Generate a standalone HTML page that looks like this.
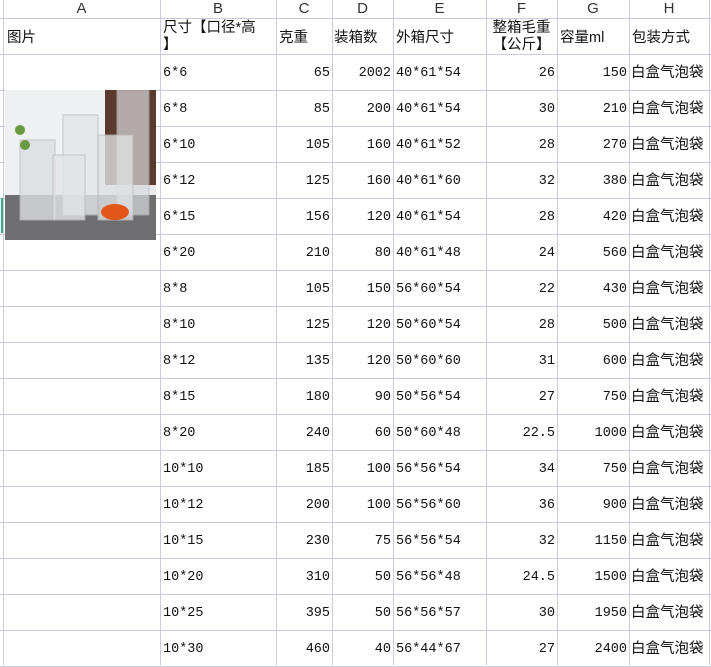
<!DOCTYPE html>
<html><head><meta charset="utf-8"><style>
body{margin:0;width:711px;height:665px;overflow:hidden;background:#fff;position:relative;font-family:"Liberation Mono","Noto Sans CJK SC",monospace;color:#111}
.v{position:absolute;top:0;width:1px;height:665px;background:#c8cbe2}
.h{position:absolute;left:0;width:711px;height:1px;background:#c8cbe2}
.t{position:absolute;font-size:13.5px;line-height:16px;white-space:nowrap}
.c{font-family:"Liberation Sans","Noto Sans CJK SC",sans-serif;font-size:14.5px}
.hd{position:absolute;top:0;height:18px;line-height:18px;font-family:"Liberation Sans",sans-serif;font-size:15px;color:#333;text-align:center}
</style></head><body>
<div id="g"></div>
<svg style="position:absolute;left:5px;top:90px" width="151" height="150" viewBox="0 0 151 150">
<rect width="151" height="150" fill="#e9eaec"/>
<rect x="100" y="0" width="51" height="95" fill="#5a3a2c"/>
<rect x="0" y="0" width="100" height="110" fill="#eef0f2"/>
<rect x="0" y="105" width="151" height="45" fill="#6e6e70"/>
<rect x="15" y="50" width="35" height="80" fill="#dcdfe2" stroke="#bbb" opacity=".8"/>
<rect x="58" y="25" width="35" height="100" fill="#e4e6e8" stroke="#bbb" opacity=".8"/>
<rect x="112" y="0" width="32" height="125" fill="#d8dadd" stroke="#bbb" opacity=".7"/>
<rect x="48" y="65" width="32" height="65" fill="#e2e4e6" stroke="#bbb" opacity=".8"/>
<rect x="93" y="45" width="35" height="85" fill="#dfe1e3" stroke="#bbb" opacity=".8"/>
<ellipse cx="110" cy="122" rx="14" ry="8" fill="#e2561a"/>
<circle cx="15" cy="40" r="5" fill="#6a9a40"/><circle cx="20" cy="55" r="5" fill="#6a9a40"/>
</svg>
<div style="position:absolute;left:1px;top:198px;width:2px;height:35px;background:#2fb07a"></div>
<script>
var xs=[3,160,276,332,393,486,557,629,709],g='';
xs.forEach(x=>g+='<div class="v" style="left:'+x+'px"></div>');
var ys=[18];for(var y=54;y<=666;y+=36)ys.push(y);
ys.forEach(y=>g+='<div class="h" style="top:'+y+'px"></div>');
var L='ABCDEFGH';for(var i=0;i<8;i++)g+='<div class="hd" style="left:'+xs[i]+'px;width:'+(xs[i+1]-xs[i])+'px">'+L[i]+'</div>';
g+='<div class="t c" style="left:7px;top:30px">图片</div>';
g+='<div class="t c" style="left:163px;top:20px;line-height:17px">尺寸【口径*高<br>】</div>';
g+='<div class="t c" style="left:279px;top:30px">克重</div>';
g+='<div class="t c" style="left:334px;top:30px">装箱数</div>';
g+='<div class="t c" style="left:396px;top:30px">外箱尺寸</div>';
g+='<div class="t c" style="left:486px;width:71px;text-align:center;top:20px;line-height:17px">整箱毛重<br>【公斤】</div>';
g+='<div class="t c" style="left:560px;top:30px">容量ml</div>';
g+='<div class="t c" style="left:632px;top:30px">包装方式</div>';
var R=[["6*6",65,2002,"40*61*54",26,150],["6*8",85,200,"40*61*54",30,210],["6*10",105,160,"40*61*52",28,270],["6*12",125,160,"40*61*60",32,380],["6*15",156,120,"40*61*54",28,420],["6*20",210,80,"40*61*48",24,560],["8*8",105,150,"56*60*54",22,430],["8*10",125,120,"50*60*54",28,500],["8*12",135,120,"50*60*60",31,600],["8*15",180,90,"50*56*54",27,750],["8*20",240,60,"50*60*48","22.5",1000],["10*10",185,100,"56*56*54",34,750],["10*12",200,100,"56*56*60",36,900],["10*15",230,75,"56*56*54",32,1150],["10*20",310,50,"56*56*48","24.5",1500],["10*25",395,50,"56*56*57",30,1950],["10*30",460,40,"56*44*67",27,2400]];
R.forEach((r,k)=>{var t=54+36*k+12;
g+='<div class="t" style="left:163px;top:'+t+'px">'+r[0]+'</div>';
g+='<div class="t" style="right:'+(711-330)+'px;top:'+t+'px">'+r[1]+'</div>';
g+='<div class="t" style="right:'+(711-391)+'px;top:'+t+'px">'+r[2]+'</div>';
g+='<div class="t" style="left:396px;top:'+t+'px">'+r[3]+'</div>';
g+='<div class="t" style="right:'+(711-555)+'px;top:'+t+'px">'+r[4]+'</div>';
g+='<div class="t" style="right:'+(711-627)+'px;top:'+t+'px">'+r[5]+'</div>';
g+='<div class="t c" style="left:631px;top:'+(t-1)+'px">白盒气泡袋</div>';});
document.getElementById('g').innerHTML=g;
</script>
</body></html>
